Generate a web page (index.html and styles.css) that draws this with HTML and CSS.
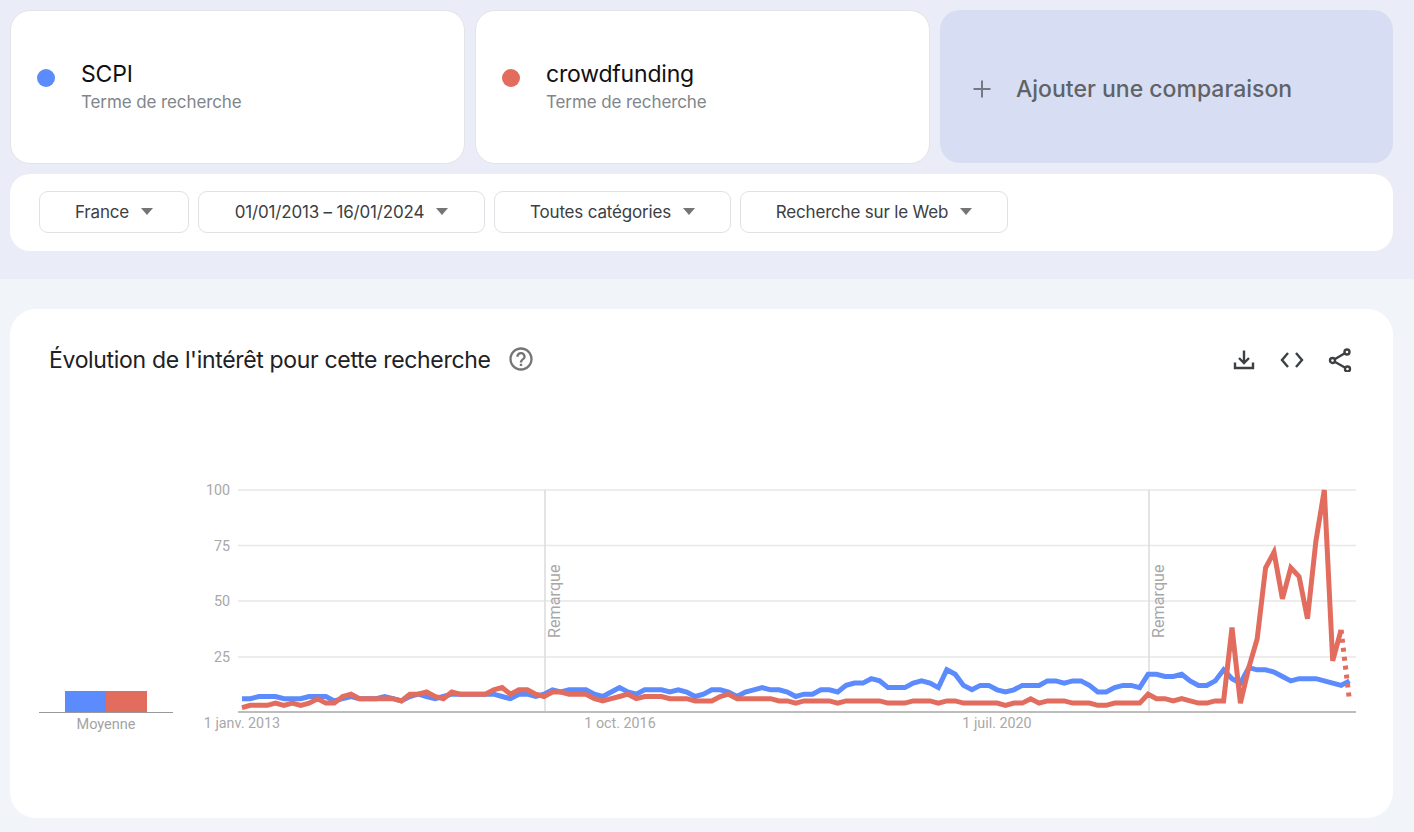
FILE: index.html
```html
<!DOCTYPE html>
<html lang="fr">

<head>
    <meta charset="UTF-8">
    <title>Google Trends - Comparer</title>
    <link rel="stylesheet" href="styles.css">
</head>

<body>

    <section class="top">
        <div class="terms">
            <div class="term">
                <span class="dot dot-blue"></span>
                <div>
                    <div class="term-name">SCPI</div>
                    <div class="term-type">Terme de recherche</div>
                </div>
            </div>
            <div class="term">
                <span class="dot dot-red"></span>
                <div>
                    <div class="term-name">crowdfunding</div>
                    <div class="term-type">Terme de recherche</div>
                </div>
            </div>
            <div class="term term-add">
                <svg class="plus" viewBox="0 0 18 18" width="18" height="18">
                    <path d="M9 0.5v17M0.5 9h17" />
                </svg>
                <span>Ajouter une comparaison</span>
            </div>
        </div>

        <div class="filters">
            <div class="chip chip-country">France<span class="caret"></span></div>
            <div class="chip chip-date">01/01/2013 – 16/01/2024<span class="caret"></span></div>
            <div class="chip chip-category">Toutes catégories<span class="caret"></span></div>
            <div class="chip chip-type">Recherche sur le Web<span class="caret"></span></div>
        </div>
    </section>

    <section class="card">
        <div class="card-header">
            <div class="card-title">
                <h2>Évolution de l'intérêt pour cette recherche</h2>
                <svg class="help" viewBox="0 0 24 24" width="28" height="28">
                    <path d="M11 18h2v-2h-2v2zm1-16C6.48 2 2 6.48 2 12s4.48 10 10 10 10-4.48 10-10S17.52 2 12 2zm0 18c-4.41 0-8-3.59-8-8s3.59-8 8-8 8 3.59 8 8-3.59 8-8 8zm0-14c-2.21 0-4 1.79-4 4h2c0-1.1.9-2 2-2s2 .9 2 2c0 2-3 1.75-3 5h2c0-2.25 3-2.5 3-5 0-2.21-1.79-4-4-4z" />
                </svg>
            </div>
            <div class="actions">
                <svg viewBox="0 0 24 24" width="24" height="24">
                    <path d="M12 2.5v12M7 10l5 5 5-5M3 14.5v5.5h18v-5.5" />
                </svg>
                <svg viewBox="0 0 24 24" width="24" height="24">
                    <path d="M8 5l-6 7 6 7M16 5l6 7-6 7" />
                </svg>
                <svg viewBox="0 0 24 24" width="24" height="24">
                    <circle cx="4.5" cy="12.5" r="2.5" />
                    <circle cx="19" cy="4" r="2.5" />
                    <circle cx="19.5" cy="21" r="2.5" />
                    <path d="M6.7 11.2L16.8 5.3M6.7 13.8L17.3 19.7" />
                </svg>
            </div>
        </div>

        <div class="chart-row">
            <div class="average">
                <div class="average-bars">
                    <div class="average-bar dot-blue"></div>
                    <div class="average-bar dot-red"></div>
                </div>
                <div class="average-label">Moyenne</div>
            </div>

            <!-- viewBox follows the page coordinates of the chart -->
            <svg class="chart" viewBox="200 470 1160 270" width="1160" height="270">
                <defs>
                    <clipPath id="plot">
                        <rect x="200" y="489" width="1160" height="230" />
                    </clipPath>
                </defs>

                <path class="grid" d="M238 490H1356M238 545.5H1356M238 601H1356M238 657H1356" />
                <path class="marker" d="M545 490V712M1149 490V712" />
                <path class="axis" d="M238 712H1356" />

                <text class="tick" x="230" y="495" text-anchor="end">100</text>
                <text class="tick" x="230" y="551" text-anchor="end">75</text>
                <text class="tick" x="230" y="606" text-anchor="end">50</text>
                <text class="tick" x="230" y="662" text-anchor="end">25</text>

                <text class="tick" x="242" y="728" text-anchor="middle">1 janv. 2013</text>
                <text class="tick" x="620" y="728" text-anchor="middle">1 oct. 2016</text>
                <text class="tick" x="997" y="728" text-anchor="middle">1 juil. 2020</text>

                <text class="note" transform="translate(560 638) rotate(-90)">Remarque</text>
                <text class="note" transform="translate(1164 638) rotate(-90)">Remarque</text>

                <g clip-path="url(#plot)">
                    <polyline id="lineBlue" class="line line-blue" />
                    <polyline id="lineRed" class="line line-red" />
                    <polyline id="lineRedPartial" class="line line-red line-partial" />
                </g>
            </svg>
        </div>
    </section>

    <script src="chart.js"></script>

</body>

</html>
```

FILE: styles.css
```css
body {
    font-family: Inter, "Open Sans", sans-serif;
    background-color: #f1f4f9;
    margin: 0;
    padding: 0;
}

.top {
    background-color: #eaedf7;
    height: 279px;
    padding: 10px 21px 0 10px;
    box-sizing: border-box;
}

.terms {
    display: flex;
    gap: 10px;
}

.term {
    flex: none;
    width: 455px;
    height: 154px;
    display: flex;
    align-items: center;
    background-color: white;
    border: 1px solid #e3e4e8;
    border-radius: 20px;
    box-sizing: border-box;
    padding: 2px 26px 0;
}

.dot {
    width: 18px;
    height: 18px;
    border-radius: 50%;
    margin-right: 26px;
    margin-bottom: 20px;
    flex: none;
}

.dot-blue {
    background-color: #5b8bfd;
}

.dot-red {
    background-color: #e26c5e;
}

.term-name {
    font-size: 23px;
    line-height: 28px;
    color: #111;
    letter-spacing: -0.2px;
}

.term-type {
    font-size: 17px;
    line-height: 28px;
    color: #80868b;
    letter-spacing: -0.1px;
}

.term-add {
    width: 453px;
    height: 153px;
    background-color: #d7def3;
    border: none;
    padding: 5px 26px 0 33px;
    font-size: 23px;
    font-weight: 500;
    color: #5f6368;
}

.plus {
    margin-right: 25px;
}

.plus path {
    stroke: #757a80;
    stroke-width: 2;
    fill: none;
}

.filters {
    display: flex;
    gap: 9px;
    align-items: center;
    height: 77px;
    box-sizing: border-box;
    margin-top: 10px;
    padding: 0 0 2px 29px;
    background-color: white;
    border-radius: 20px;
}

.chip {
    display: flex;
    align-items: center;
    justify-content: center;
    height: 42px;
    box-sizing: border-box;
    border: 1px solid #e0e1e5;
    border-radius: 9px;
    font-size: 17px;
    color: #3c4043;
    letter-spacing: -0.18px;
}

.chip-country {
    width: 150px;
}

.chip-date {
    width: 287px;
}

.chip-category {
    width: 237px;
}

.chip-type {
    width: 268px;
}

.caret {
    width: 0;
    height: 0;
    margin-left: 12px;
    border-left: 6.5px solid transparent;
    border-right: 6.5px solid transparent;
    border-top: 7px solid #757575;
}

.card {
    margin: 30px 21px 14px 10px;
    height: 509px;
    box-sizing: border-box;
    background-color: white;
    border-radius: 26px;
    padding: 30px 0 0 29px;
}

.card-header {
    display: flex;
    justify-content: space-between;
    align-items: center;
    height: 42px;
    padding: 0 41px 0 10px;
}

.card-title {
    display: flex;
    align-items: center;
    gap: 16px;
}

h2 {
    margin: 0;
    font-size: 23px;
    font-weight: 400;
    color: #202124;
    letter-spacing: -0.33px;
}

.help {
    fill: #757575;
    margin-top: -2px;
}

.actions {
    display: flex;
    gap: 24px;
}

.actions svg {
    fill: none;
    stroke: #3c4043;
    stroke-width: 2.4;
}

.chart-row {
    display: flex;
    margin-top: 89px;
}

.average {
    width: 134px;
    height: 270px;
    margin-right: 27px;
    display: flex;
    flex-direction: column;
    justify-content: flex-end;
}

.average-bars {
    display: flex;
    justify-content: center;
    border-bottom: 1px solid #999;
}

.average-bar {
    width: 41px;
    height: 21px;
}

.average-label {
    font-family: Roboto, sans-serif;
    font-size: 14.5px;
    line-height: 24px;
    height: 27px;
    text-align: center;
    color: #a3a3a3;
}

.chart {
    display: block;
}

.grid {
    stroke: #e8e8e8;
    stroke-width: 1.5;
    fill: none;
}

.marker {
    stroke: #dcdcdc;
    stroke-width: 1.5;
    fill: none;
}

.axis {
    stroke: #bdbdbd;
    stroke-width: 2;
    fill: none;
}

.tick {
    font-family: Roboto, sans-serif;
    font-size: 14.3px;
    fill: #a8a8a8;
}

.note {
    font-family: Roboto, sans-serif;
    font-size: 16.2px;
    fill: #a8a8a8;
}

.line {
    fill: none;
    stroke-width: 5;
    stroke-linejoin: miter;
}

.line-blue {
    stroke: #5b8bfd;
}

.line-red {
    stroke: #e26c5e;
}

.line-partial {
    stroke-dasharray: 4 5;
}
```

FILE: chart.js
```js
// monthly values, janv. 2013 to janv. 2024
const blue = [
    6, 6, 7, 7, 7, 6, 6, 6, 7, 7,
    7, 5, 6, 7, 6, 6, 6, 7, 6, 5,
    7, 8, 7, 6, 7, 8, 8, 8, 8, 8,
    8, 7, 6, 8, 8, 7, 8, 10, 9, 10,
    10, 10, 8, 7, 9, 11, 9, 8, 10, 10,
    10, 9, 10, 9, 7, 8, 10, 10, 9, 7,
    9, 10, 11, 10, 10, 9, 7, 8, 8, 10,
    10, 9, 12, 13, 13, 15, 14, 11, 11, 11,
    13, 14, 13, 11, 19, 17, 12, 10, 12, 12,
    10, 9, 10, 12, 12, 12, 14, 14, 13, 14,
    14, 12, 9, 9, 11, 12, 12, 11, 17, 17,
    16, 16, 17, 14, 12, 12, 14, 19, 15, 13,
    20, 19, 19, 18, 16, 14, 15, 15, 15, 14,
    13, 12, 14
];

const red = [
    2, 3, 3, 3, 4, 3, 4, 3, 4, 6,
    4, 4, 7, 8, 6, 6, 6, 6, 6, 5,
    8, 8, 9, 7, 6, 9, 8, 8, 8, 8,
    10, 11, 8, 10, 10, 8, 7, 9, 9, 8,
    8, 8, 6, 5, 6, 7, 8, 6, 7, 7,
    7, 6, 6, 6, 5, 5, 5, 7, 8, 6,
    6, 6, 6, 6, 5, 5, 4, 5, 5, 5,
    5, 4, 5, 5, 5, 5, 5, 4, 4, 4,
    5, 5, 5, 4, 5, 5, 4, 4, 4, 4,
    4, 3, 4, 4, 6, 4, 5, 5, 5, 4,
    4, 4, 3, 3, 4, 4, 4, 4, 8, 6,
    6, 5, 6, 5, 4, 4, 5, 5, 38, 4,
    20, 33, 65, 72, 51, 65, 61, 42, 77, 100,
    23, 37, 5
];

function toPoints(values, start) {
    return values.map(function (value, i) {
        const x = 242 + (start + i) * 8.39;
        const y = 712 - value * 2.22;
        return x.toFixed(1) + ',' + y.toFixed(1);
    }).join(' ');
}

document.getElementById('lineBlue').setAttribute('points', toPoints(blue, 0));
// the last month is not complete yet, so it gets the dotted part
document.getElementById('lineRed').setAttribute('points', toPoints(red.slice(0, -1), 0));
document.getElementById('lineRedPartial').setAttribute('points', toPoints(red.slice(-2), red.length - 2));
```
